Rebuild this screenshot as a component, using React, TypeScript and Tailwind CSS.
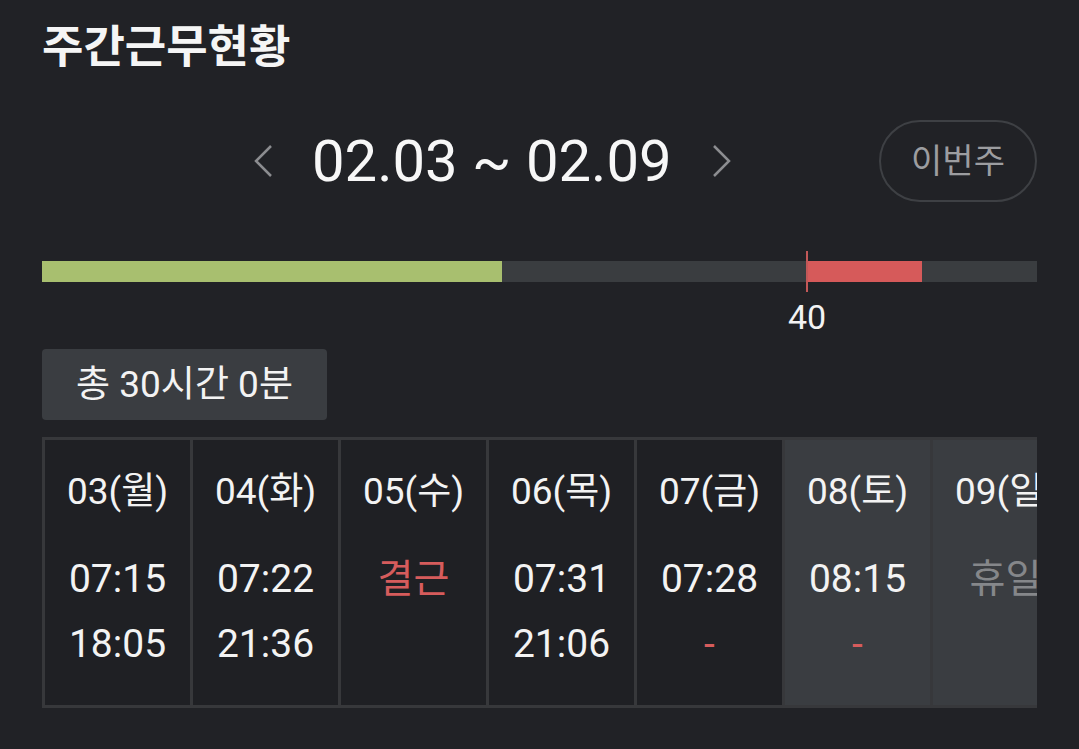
import React from 'react';

type Day = {
  label: string;
  lines: { text: string; tone?: 'red' | 'gray' | 'dash' }[];
  weekend?: boolean;
};

const days: Day[] = [
  { label: '03(월)', lines: [{ text: '07:15' }, { text: '18:05' }] },
  { label: '04(화)', lines: [{ text: '07:22' }, { text: '21:36' }] },
  { label: '05(수)', lines: [{ text: '결근', tone: 'red' }] },
  { label: '06(목)', lines: [{ text: '07:31' }, { text: '21:06' }] },
  { label: '07(금)', lines: [{ text: '07:28' }, { text: '-', tone: 'dash' }] },
  { label: '08(토)', lines: [{ text: '08:15' }, { text: '-', tone: 'dash' }], weekend: true },
  { label: '09(일)', lines: [{ text: '휴일', tone: 'gray' }], weekend: true },
];

const font = { fontFamily: 'Roboto, "Noto Sans CJK KR", sans-serif' };

function DayCell({ day }: { day: Day }) {
  return (
    <div
      className={`flex flex-col items-center w-[145px] shrink-0 h-[265px] pt-[30px] ${
        day.weekend ? 'bg-[#3a3d41]' : 'bg-[#1f2024]'
      }`}
    >
      <div className="text-[37px] leading-[44px] text-[#f3f3f3] whitespace-nowrap">{day.label}</div>
      <div className="mt-[43px] flex flex-col items-center gap-[21px]">
        {day.lines.map((l, i) => (
          <div
            key={i}
            className={`text-[39px] leading-[44px] whitespace-nowrap ${
              l.tone === 'red'
                ? 'text-[#d65c5c]'
                : l.tone === 'gray'
                ? 'text-[#85878a]'
                : l.tone === 'dash'
                ? 'text-[#d65c5c] text-[30px]'
                : 'text-[#f3f3f3]'
            }`}
          >
            {l.text}
          </div>
        ))}
      </div>
    </div>
  );
}

export default function App() {
  return (
    <div className="w-[1079px] h-[749px] bg-[#212226] overflow-hidden" style={font}>
      <div className="px-[42px] pt-[25px]">
        <h1 className="text-[45px] leading-none font-bold text-[#f5f5f5]">주간근무현황</h1>

        <div className="mt-[50px] flex items-center h-[82px]">
          <div className="ml-[211px] flex items-center">
            <svg width="20" height="34" viewBox="0 0 20 34" fill="none">
              <path d="M18 2 L3 17 L18 32" stroke="#8c8d90" strokeWidth="2.5" />
            </svg>
            <span className="ml-[39px] text-[58px] leading-none text-[#f7f7f7] whitespace-nowrap">02.03 ~ 02.09</span>
            <svg className="ml-[40px]" width="20" height="34" viewBox="0 0 20 34" fill="none">
              <path d="M2 2 L17 17 L2 32" stroke="#8c8d90" strokeWidth="2.5" />
            </svg>
          </div>
          <button className="ml-auto w-[158px] h-[82px] rounded-full border-2 border-[#3e4044] text-[34px] text-[#9c9da0]">
            이번주
          </button>
        </div>

        <div className="relative mt-[59px] h-[21px] bg-[#3a3d40] flex">
          <div className="w-[460px] bg-[#a8bf6f]" />
          <div className="ml-[305px] w-[115px] bg-[#d65a5a]" />
          <div className="absolute left-[764px] top-[-10px] w-[2px] h-[41px] bg-[#c25858]" />
          <div className="absolute left-[765px] -translate-x-1/2 top-[36px] text-[34px] leading-[40px] text-[#f3f3f3]">40</div>
        </div>

        <div className="mt-[67px] inline-flex items-center justify-center w-[285px] h-[71px] rounded-[4px] bg-[#3a3d41] text-[37px] text-[#f3f3f3]">
          총 30시간 0분
        </div>

        <div className="mt-[17px] w-[995px] overflow-hidden">
          <div className="flex gap-[3px] p-[3px] pr-0 bg-[#37383b] w-max">
            {days.map((d) => (
              <DayCell key={d.label} day={d} />
            ))}
          </div>
        </div>
      </div>
    </div>
  );
}
